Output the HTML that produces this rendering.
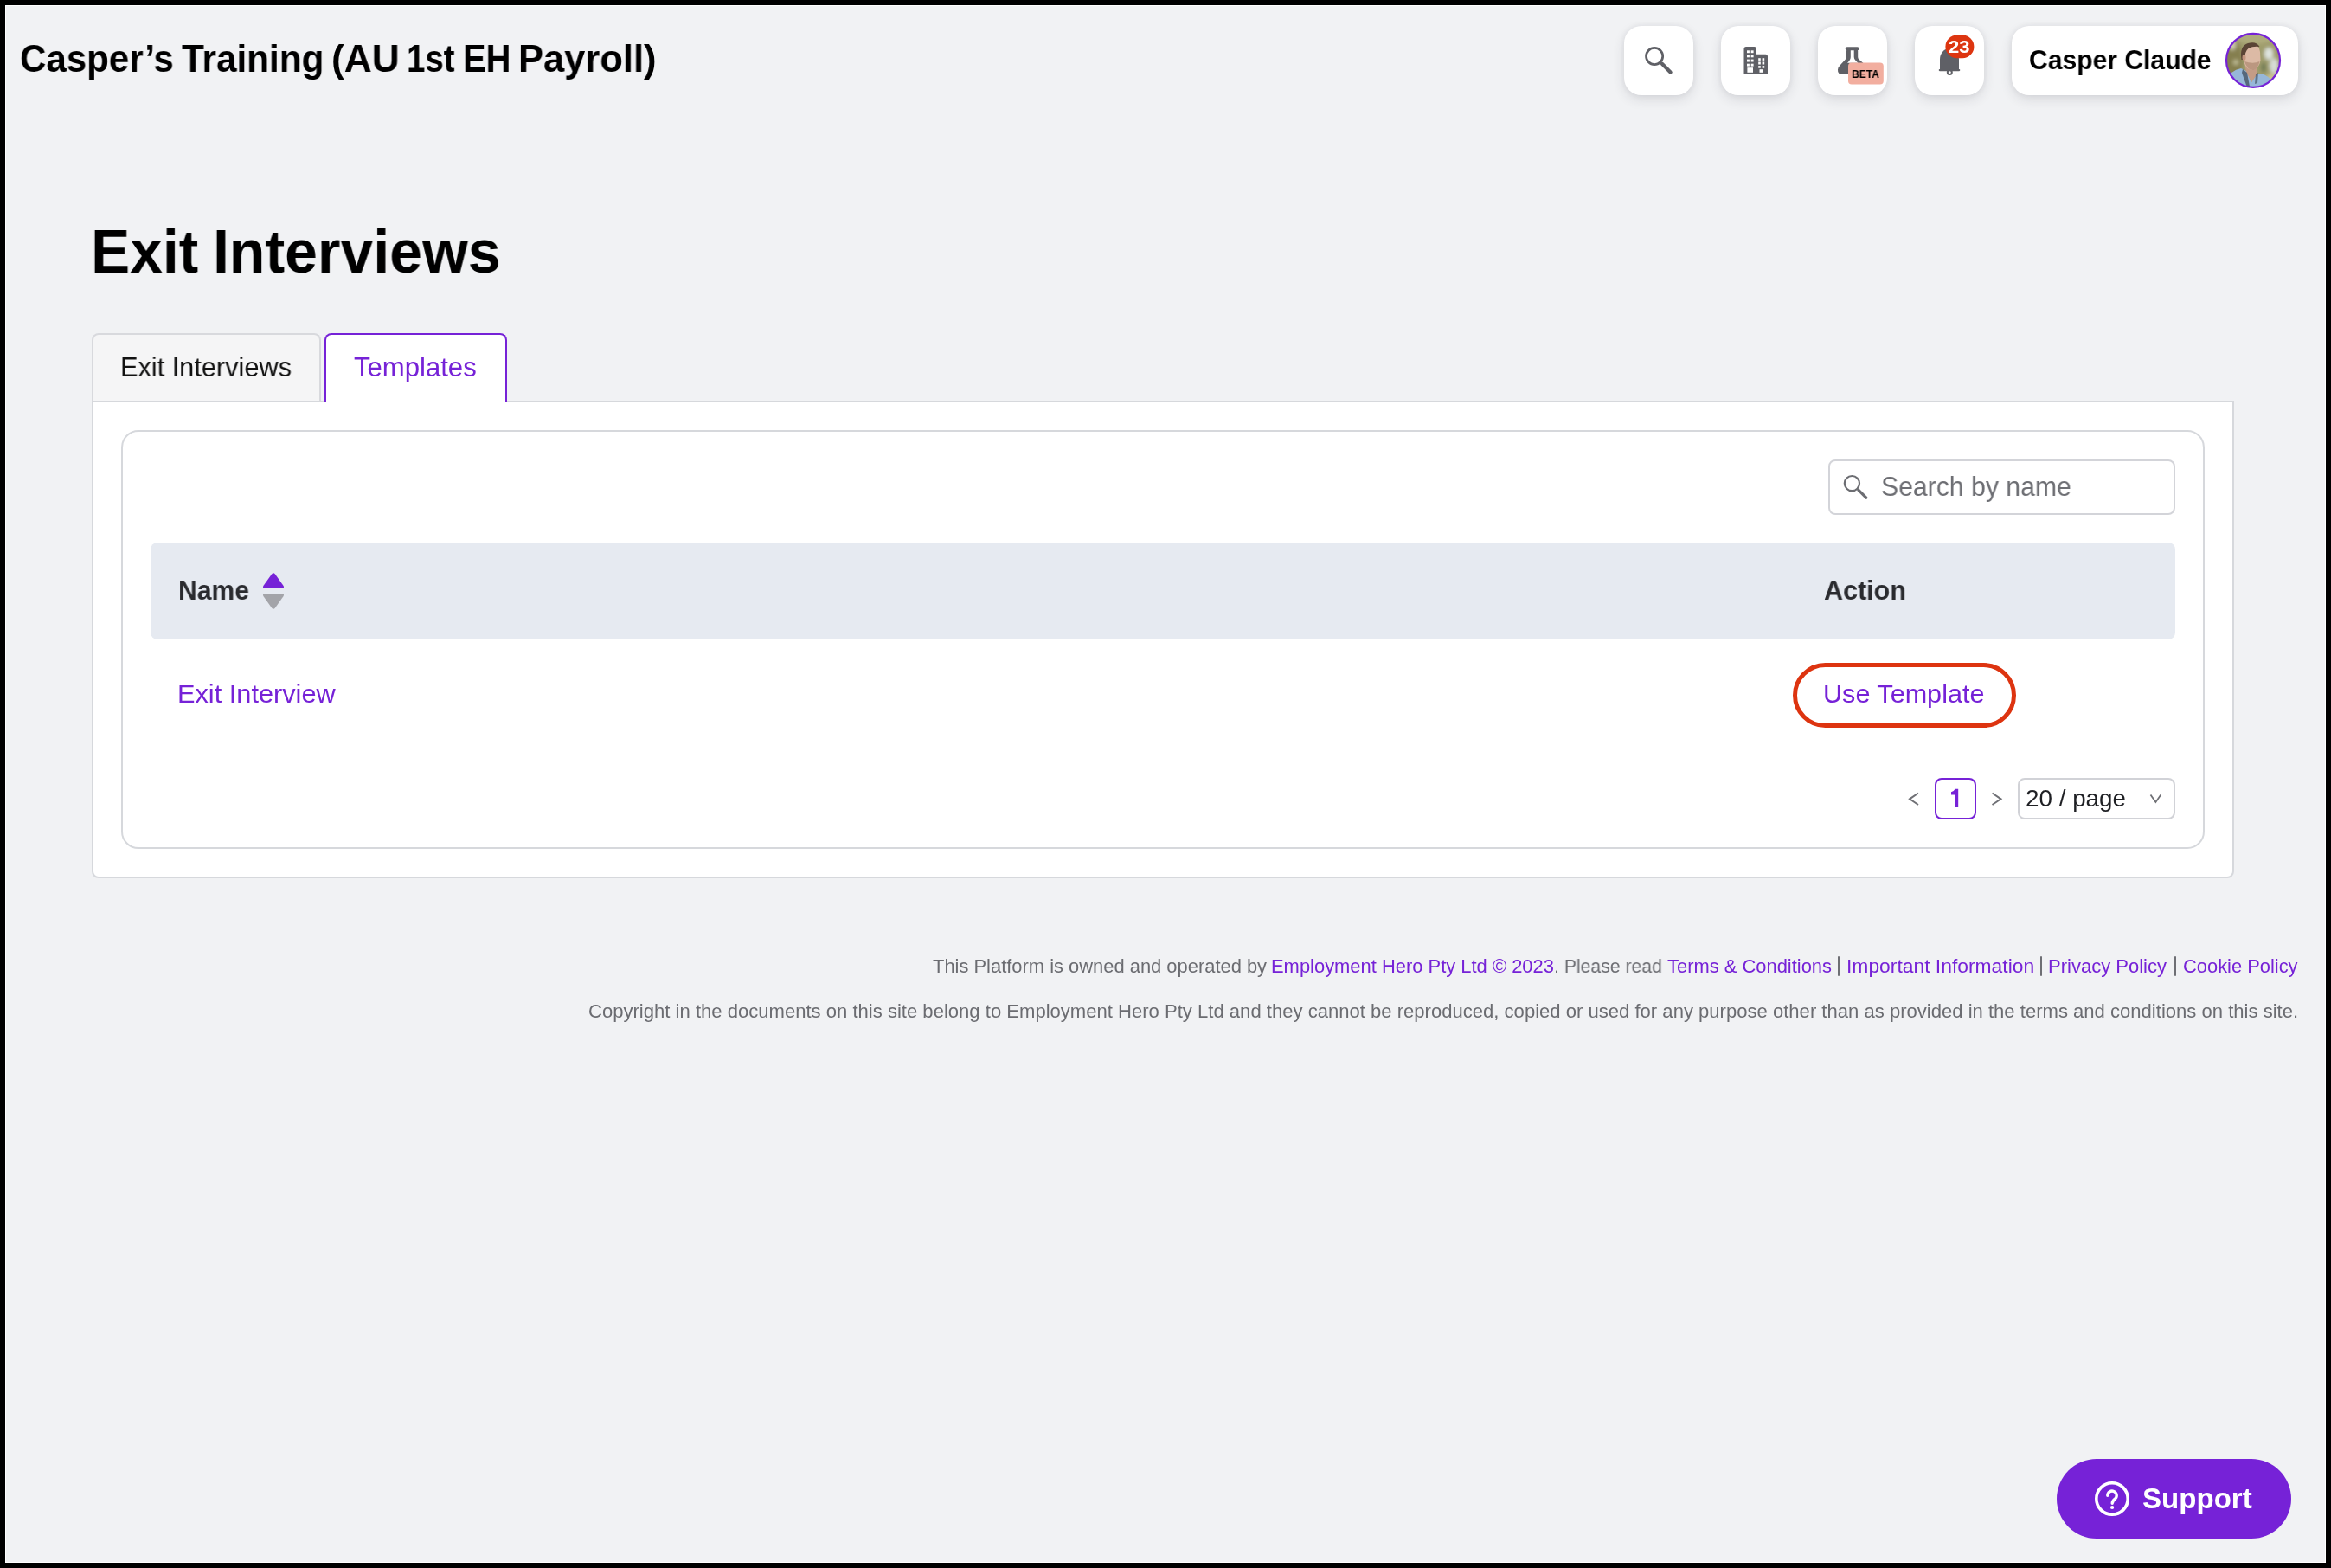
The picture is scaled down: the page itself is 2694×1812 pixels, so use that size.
<!DOCTYPE html>
<html><head><meta charset="utf-8">
<style>
*{box-sizing:border-box;margin:0;padding:0}
html,body{width:2694px;height:1812px;overflow:hidden;background:#000}
body{font-family:"Liberation Sans",sans-serif;position:relative}
#frame{position:absolute;left:6px;top:6px;width:2682px;height:1800px;background:#f1f2f4;border:1px solid #fff}
.abs{position:absolute}
.t{position:absolute;white-space:nowrap;line-height:1;transform-origin:0 0;will-change:transform}
.b{font-weight:bold}
.hbtn{position:absolute;top:30px;width:80px;height:80px;background:#fff;border-radius:20px;box-shadow:0 5px 14px rgba(40,45,60,0.12),0 0 6px rgba(40,45,60,0.07)}
svg{position:absolute;left:0;top:0;overflow:visible}
.p{color:#7622d7}
.sep{color:#3d3e42}
</style></head>
<body>
<div id="frame"></div>

<!-- ===== top bar ===== -->
<div class="t b" style="left:23.3px;top:46.22px;font-size:44.62px;transform:scaleX(0.9429);color:#000">Casper’s</div>
<div class="t b" style="left:210.4px;top:46.22px;font-size:44.62px;transform:scaleX(0.9478);color:#000">Training</div>
<div class="t b" style="left:382.68px;top:46.22px;font-size:44.62px;transform:scaleX(0.9937);color:#000">(AU</div>
<div class="t b" style="left:469.63px;top:46.22px;font-size:44.62px;transform:scaleX(0.8626);color:#000">1st</div>
<div class="t b" style="left:535.24px;top:46.22px;font-size:44.62px;transform:scaleX(0.8929);color:#000">EH</div>
<div class="t b" style="left:599.2px;top:46.22px;font-size:44.62px;transform:scaleX(0.9747);color:#000">Payroll)</div>

<div class="hbtn" style="left:1877px"></div>
<div class="hbtn" style="left:1989px"></div>
<div class="hbtn" style="left:2101px"></div>
<div class="hbtn" style="left:2213px"></div>
<div class="hbtn" style="left:2325px;width:331px"></div>

<svg width="2694" height="200" viewBox="0 0 2694 200">
  <!-- search icon -->
  <circle cx="1912.1" cy="65" r="9.6" fill="none" stroke="#5f6066" stroke-width="2.7"/>
  <line x1="1920.9" y1="73.8" x2="1930.6" y2="83.4" stroke="#5f6066" stroke-width="4.2" stroke-linecap="round"/>
  <!-- building icon -->
  <path fill="#5f6066" d="M2015.5 86 V56.5 Q2015.5 54 2018 54 H2027.5 Q2030 54 2030 56.5 V62.7 H2040.5 Q2043 62.7 2043 65.2 V86 Z"/>
  <g fill="#fff">
    <rect x="2019" y="58.3" width="2.9" height="2.9"/><rect x="2023.7" y="58.3" width="2.9" height="2.9"/>
    <rect x="2019" y="63.4" width="2.9" height="2.9"/><rect x="2023.7" y="63.4" width="2.9" height="2.9"/>
    <rect x="2019" y="68.6" width="2.9" height="2.9"/><rect x="2023.7" y="68.6" width="2.9" height="2.9"/>
    <rect x="2019" y="73.7" width="2.9" height="2.9"/><rect x="2023.7" y="73.7" width="2.9" height="2.9"/>
    <rect x="2019.4" y="78.2" width="6.6" height="5.6"/>
    <rect x="2032.2" y="67.2" width="2.6" height="2.7"/><rect x="2036.6" y="67.2" width="2.6" height="2.7"/>
    <rect x="2032.2" y="71.5" width="2.6" height="3"/><rect x="2036.6" y="71.5" width="2.6" height="3"/>
    <rect x="2032.2" y="76.1" width="2.6" height="2.6"/><rect x="2036.6" y="76.1" width="2.6" height="2.6"/>
    <rect x="2033.5" y="80.2" width="4.3" height="3.6"/>
  </g>
  <!-- flask -->
  <path fill="#5f6066" d="M2134.7 54.2 H2146.6 A2 2 0 0 1 2146.6 58.2 H2147.2 V66 Q2147.2 67.5 2148.5 68.7 L2157 76 V86 H2130 Q2123.5 86 2124 80.5 Q2124.3 77.5 2127 75 L2132.5 69 Q2134 67.5 2134 65.5 V58.2 H2134.7 A2 2 0 0 1 2134.7 54.2 Z"/>
  <path fill="#fff" d="M2138.8 58.2 H2142.7 V66 Q2142.7 68.5 2145 70.5 L2147.5 72.8 H2135 L2137.2 70.5 Q2138.8 68.5 2138.8 66 Z"/>
  <rect x="2136" y="72.4" width="40.8" height="25.2" rx="4" fill="#f2ae9f"/>
  <!-- bell -->
  <path fill="#5f6066" d="M2242 80 V68.5 A11 12.5 0 0 1 2264 68.5 V80 H2264.2 A1.1 1.1 0 0 1 2264.2 82.2 H2241.8 A1.1 1.1 0 0 1 2241.8 80 Z"/>
  <circle cx="2253.3" cy="83.4" r="2.5" fill="none" stroke="#5f6066" stroke-width="2"/>
  <rect x="2248.4" y="40.6" width="33" height="26.6" rx="13.3" fill="#dd3510"/>
  <!-- avatar -->
  <defs>
    <clipPath id="av"><circle cx="2604" cy="69.8" r="31"/></clipPath>
    <filter id="bl" x="-20%" y="-20%" width="140%" height="140%"><feGaussianBlur stdDeviation="2.2"/></filter>
    <filter id="bl2" x="-20%" y="-20%" width="140%" height="140%"><feGaussianBlur stdDeviation="0.6"/></filter>
  </defs>
  <g clip-path="url(#av)">
    <g filter="url(#bl)">
      <rect x="2566" y="32" width="76" height="76" fill="#9f9c6c"/>
      <ellipse cx="2580" cy="70" rx="12" ry="24" fill="#857f50"/>
      <ellipse cx="2606" cy="42" rx="22" ry="9" fill="#aeab7c"/>
      <ellipse cx="2580" cy="52" rx="4" ry="6" fill="#cfcdb0"/>
      <ellipse cx="2584" cy="72" rx="3" ry="3" fill="#c2bf98"/>
      <ellipse cx="2622" cy="62" rx="5" ry="7" fill="#dfe5e0"/>
      <ellipse cx="2628" cy="76" rx="5" ry="9" fill="#d7ddd6"/>
      <ellipse cx="2616" cy="78" rx="3" ry="6" fill="#6f7a55"/>
      <ellipse cx="2627" cy="92" rx="9" ry="7" fill="#c9c190"/>
    </g>
    <g filter="url(#bl2)">
      <path d="M2578 104 L2579 84 Q2584 80 2590 79 L2596 82 L2602 95 L2608 86 L2614 85 Q2622 88 2626 94 L2632 104 Z" fill="#97b7d8"/>
      <path d="M2594 72 L2608 73 L2608.5 86 L2602 95 L2596 83 Z" fill="#c49c86"/>
      <path d="M2592 80 L2597 84 L2600 100 L2597 101 L2591 84 Z" fill="#3b4656" opacity="0.7"/>
      <path d="M2607 86 L2610 84 L2609 96 L2606 97 Z" fill="#3b4656" opacity="0.6"/>
      <path d="M2592 62 Q2592 50 2602 50.5 Q2611 51 2612 60 L2612.5 70 Q2611 79 2603 81 Q2596 80 2594 73 Z" fill="#dcbaa5"/>
      <path d="M2594 71 Q2597 81 2604 81 Q2610 79 2611.5 71 Q2604 74.5 2594 71 Z" fill="#a58067" opacity="0.6"/>
      <path d="M2590.5 69 Q2588 53 2598 50 Q2608 47.5 2611.5 54 Q2604 53 2598.5 56 Q2594.5 59 2594 69 Z" fill="#5a4434"/>
      <ellipse cx="2593.5" cy="66.5" rx="2" ry="3.4" fill="#c3967f"/>
    </g>
  </g>
  <circle cx="2604" cy="69.8" r="31" fill="none" stroke="#7622d7" stroke-width="2.2"/>
</svg>
<div id="beta" class="t b" style="left:2140.27px;top:80.17px;font-size:12.79px;transform:scaleX(0.9467);color:#000">BETA</div>
<div id="n23" class="t b" style="left:2252.12px;top:43.58px;font-size:20.93px;transform:scaleX(1.052);color:#fff">23</div>
<div id="uname" class="t b" style="left:2345.30px;top:54.03px;font-size:30.67px;transform:scaleX(0.9810);color:#000">Casper Claude</div>

<!-- ===== page title ===== -->
<div class="t b" style="left:105.18px;top:255.61px;font-size:70.49px;transform:scaleX(0.9614);color:#000">Exit</div>
<div class="t b" style="left:246.26px;top:255.61px;font-size:70.49px;transform:scaleX(0.9651);color:#000">Interviews</div>

<!-- ===== panel ===== -->
<div class="abs" style="left:106px;top:463px;width:2476px;height:552px;background:#fff;border:2px solid #d6d8dc;border-radius:0 0 8px 8px"></div>
<div class="abs" style="left:106px;top:385px;width:265px;height:78px;background:#f5f5f6;border:2px solid #d8d9dd;border-bottom:none;border-radius:8px 8px 0 0"></div>
<div class="abs" style="left:375px;top:385px;width:211px;height:80px;background:#fff;border:2px solid #7622d7;border-bottom:none;border-radius:8px 8px 0 0"></div>
<div id="tab1" class="t" style="left:138.84px;top:409.06px;font-size:31.10px;transform:scaleX(0.9874);color:#111">Exit Interviews</div>
<div id="tab2" class="t p" style="left:409.38px;top:409.71px;font-size:30.81px;transform:scaleX(1.0096)">Templates</div>

<div class="abs" style="left:140px;top:497px;width:2408px;height:484px;border:2px solid #d6d8dc;border-radius:20px"></div>

<!-- search -->
<div class="abs" style="left:2113px;top:531px;width:401px;height:64px;border:2px solid #d3d4d9;border-radius:8px"></div>
<svg width="2694" height="1000" viewBox="0 0 2694 1000">
  <circle cx="2140.4" cy="558.6" r="8.6" fill="none" stroke="#6c6d72" stroke-width="2.2"/>
  <line x1="2147.8" y1="566.2" x2="2156.8" y2="575.2" stroke="#6c6d72" stroke-width="3.3" stroke-linecap="round"/>
</svg>
<div id="ph" class="t" style="left:2174.19px;top:547.69px;font-size:30.96px;transform:scaleX(0.9749);color:#6d6e73">Search by name</div>

<!-- table header -->
<div class="abs" style="left:174px;top:627px;width:2340px;height:112px;background:#e6eaf1;border-radius:8px"></div>
<div id="hname" class="t b" style="left:205.80px;top:666.86px;font-size:31.10px;transform:scaleX(0.9669);color:#2a2b2f">Name</div>
<svg width="2694" height="1000" viewBox="0 0 2694 1000">
  <path d="M314 663.5 Q316 661 318 663.5 L327.6 677 Q329 680 326 680 H306 Q303 680 304.4 677 Z" fill="#7622d7"/>
  <path d="M314 702.5 Q316 705 318 702.5 L327.6 689 Q329 686 326 686 H306 Q303 686 304.4 689 Z" fill="#a3a4a9"/>
</svg>
<div id="haction" class="t b" style="left:2107.79px;top:666.82px;font-size:31.40px;transform:scaleX(0.9714);color:#2a2b2f">Action</div>

<!-- row -->
<div id="link" class="t p" style="left:205.44px;top:787.43px;font-size:30.09px;transform:scaleX(1.0215)">Exit Interview</div>
<div class="abs" style="left:2072px;top:766px;width:258px;height:75px;border:5px solid #dd3410;border-radius:40px"></div>
<div id="usetpl" class="t p" style="left:2106.55px;top:787.20px;font-size:30.23px;transform:scaleX(1.0122)">Use Template</div>

<!-- pagination -->
<svg width="2694" height="1000" viewBox="0 0 2694 1000">
  <polyline points="2217,916.5 2207,923.3 2217,930" fill="none" stroke="#6f7075" stroke-width="2"/>
  <polyline points="2302.5,916.5 2312.5,923.3 2302.5,930" fill="none" stroke="#6f7075" stroke-width="2"/>
  <polyline points="2485.5,918.5 2491.4,927 2497.3,918.5" fill="none" stroke="#6f7075" stroke-width="1.8"/>
</svg>
<div class="abs" style="left:2236px;top:899px;width:48px;height:48px;border:2px solid #7622d7;border-radius:8px"></div>
<svg width="2694" height="1000" viewBox="0 0 2694 1000"><path fill="#7622d7" d="M2259.6 911.8 H2263.2 V932.9 H2259.2 V918.6 H2255 V915.2 Q2258.2 914.6 2259.6 911.8 Z"/></svg>
<div class="abs" style="left:2332px;top:899px;width:182px;height:48px;border:2px solid #d1d2d7;border-radius:8px"></div>
<div id="perpage" class="t" style="left:2341.33px;top:909.53px;font-size:26.89px;transform:scaleX(1.0351);color:#1f2024">20 / page</div>

<!-- footer -->
<div class="t" style="left:1077.63px;top:1106.5px;font-size:21.51px;transform:scaleX(1.0191);color:#6b6c71">This Platform is owned and operated by</div>
<div class="t" style="left:1468.97px;top:1106.5px;font-size:21.51px;transform:scaleX(1.0198);color:#7622d7">Employment Hero Pty Ltd © 2023</div>
<div class="t" style="left:1796.03px;top:1106.5px;font-size:21.51px;transform:scaleX(0.9856);color:#6b6c71">. Please read</div>
<div class="t" style="left:1926.53px;top:1106.5px;font-size:21.51px;transform:scaleX(1.0192);color:#7622d7">Terms &amp; Conditions</div>
<div class="t" style="left:2133.51px;top:1106.5px;font-size:21.51px;transform:scaleX(1.0625);color:#7622d7">Important Information</div>
<div class="t" style="left:2367.36px;top:1106.5px;font-size:21.51px;transform:scaleX(1.024);color:#7622d7">Privacy Policy</div>
<div class="t" style="left:2522.61px;top:1106.5px;font-size:21.51px;transform:scaleX(1.0174);color:#7622d7">Cookie Policy</div>
<div class="abs" style="left:2124.3px;top:1104.8px;width:2.2px;height:23.6px;background:#6e6f74;border-radius:1px"></div>
<div class="abs" style="left:2357.7px;top:1104.8px;width:2.2px;height:23.6px;background:#6e6f74;border-radius:1px"></div>
<div class="abs" style="left:2512.7px;top:1104.8px;width:2.2px;height:23.6px;background:#6e6f74;border-radius:1px"></div>
<div id="f2" class="t" style="left:680.28px;top:1158.6px;font-size:21.37px;transform:scaleX(1.0331);color:#6b6c71">Copyright in the documents on this site belong to Employment Hero Pty Ltd and they cannot be reproduced, copied or used for any purpose other than as provided in the terms and conditions on this site.</div>

<!-- support -->
<div class="abs" style="left:2377px;top:1686px;width:271px;height:92px;background:#7622d7;border-radius:46px"></div>
<svg width="2694" height="1812" viewBox="0 0 2694 1812">
  <circle cx="2441" cy="1732" r="18.2" fill="none" stroke="#fff" stroke-width="3.6"/>
</svg>
<svg width="2694" height="1812" viewBox="0 0 2694 1812">
  <path d="M2435.8 1728.2 A5.2 5.2 0 1 1 2444.7 1731.9 Q2441.2 1734.6 2441.2 1737.2" fill="none" stroke="#fff" stroke-width="3.4" stroke-linecap="round"/>
  <circle cx="2441.1" cy="1742" r="2.1" fill="#fff"/>
</svg>
<div id="support" class="t b" style="left:2475.68px;top:1715.83px;font-size:32.56px;transform:scaleX(1.0157);color:#fff">Support</div>

</body></html>
